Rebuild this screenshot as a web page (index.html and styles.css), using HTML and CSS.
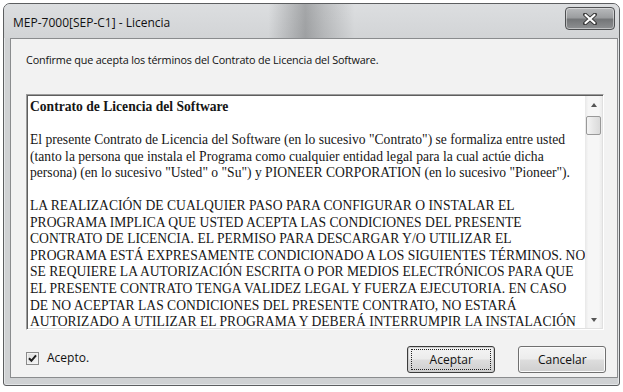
FILE: index.html
```html
<!DOCTYPE html>
<html lang="es">
<head>
  <meta charset="UTF-8">
  <title>MEP-7000[SEP-C1] - Licencia</title>
  <link rel="stylesheet" href="styles.css">
</head>
<body>
  <div class="window">
    <div class="titlebar">
      <span class="title">MEP-7000[SEP-C1] - Licencia</span>
      <div class="close">
        <svg width="14" height="12" viewBox="0 0 14 12">
          <path d="M2 1.5 L12 10.5 M12 1.5 L2 10.5" stroke="#3a3a3a" stroke-width="4" stroke-linecap="round"/>
          <path d="M2.5 2 L11.5 10 M11.5 2 L2.5 10" stroke="#fff" stroke-width="2.2" stroke-linecap="round"/>
        </svg>
      </div>
    </div>
    <div class="frame">
      <div class="client">
        <p class="prompt">Confirme que acepta los términos del Contrato de Licencia del Software.</p>

        <div class="license">
          <div class="license-text">
            <p><b>Contrato de Licencia del Software</b></p>
            <p>El presente Contrato de Licencia del Software (en lo sucesivo "Contrato") se formaliza entre usted<br>
            (tanto la persona que instala el Programa como cualquier entidad legal para la cual actúe dicha<br>
            persona) (en lo sucesivo "Usted" o "Su") y PIONEER CORPORATION (en lo sucesivo "Pioneer").</p>
            <p>LA REALIZACIÓN DE CUALQUIER PASO PARA CONFIGURAR O INSTALAR EL<br>
            PROGRAMA IMPLICA QUE USTED ACEPTA LAS CONDICIONES DEL PRESENTE<br>
            CONTRATO DE LICENCIA. EL PERMISO PARA DESCARGAR Y/O UTILIZAR EL<br>
            PROGRAMA ESTÁ EXPRESAMENTE CONDICIONADO A LOS SIGUIENTES TÉRMINOS. NO<br>
            SE REQUIERE LA AUTORIZACIÓN ESCRITA O POR MEDIOS ELECTRÓNICOS PARA QUE<br>
            EL PRESENTE CONTRATO TENGA VALIDEZ LEGAL Y FUERZA EJECUTORIA. EN CASO<br>
            DE NO ACEPTAR LAS CONDICIONES DEL PRESENTE CONTRATO, NO ESTARÁ<br>
            AUTORIZADO A UTILIZAR EL PROGRAMA Y DEBERÁ INTERRUMPIR LA INSTALACIÓN</p>
          </div>
          <div class="scrollbar">
            <div class="arrow up"></div>
            <div class="thumb"></div>
            <div class="track"></div>
            <div class="arrow down"></div>
          </div>
        </div>

        <div class="footer">
          <label class="check">
            <span class="box">
              <svg width="9" height="9" viewBox="0 0 9 9">
                <path d="M1 4.2 L3.4 6.8 L8 1.4" fill="none" stroke="#1e1e1e" stroke-width="2"/>
              </svg>
            </span>
            Acepto.
          </label>
          <div class="buttons">
            <button class="btn default"><span>Aceptar</span></button>
            <button class="btn">Cancelar</button>
          </div>
        </div>
      </div>
    </div>
  </div>
</body>
</html>
```

FILE: styles.css
```css
:root {
  --ui: "Open Sans", "Noto Sans", sans-serif;
  --serif: "Liberation Serif", "Times New Roman", serif;
  --frame: #cfd1d3;
  --client: #f2f2f2;
  --ink: #111;
}

body {
  margin: 0;
  padding: 3px 3px 6px 3px;
  background: #fff;
  font-family: var(--ui);
  font-size: 12px;
  color: var(--ink);
}

.window {
  width: 617px;
  height: 383px;
  box-sizing: border-box;
  display: flex;
  flex-direction: column;
  border: 1px solid #5c5e60;
  border-radius: 7px 7px 3px 3px;
  background: var(--frame);
  box-shadow: inset 0 0 0 1px #e4e6e8;
  overflow: hidden;
}

.titlebar {
  height: 34px;
  flex: none;
  display: flex;
  justify-content: space-between;
  align-items: flex-start;
  padding: 0 4px 0 9px;
  background:
    linear-gradient(90deg, transparent 43%, rgba(60, 62, 64, 0.35) 49%, rgba(60, 62, 64, 0.2) 52%, transparent 57%),
    linear-gradient(180deg, #dcdee0 0%, #d2d4d6 100%);
}

.title {
  padding-top: 11px;
  line-height: 16px;
  font-size: 12px;
}

.close {
  margin-top: 3px;
  width: 50px;
  height: 23px;
  box-sizing: border-box;
  display: flex;
  justify-content: center;
  align-items: center;
  border: 1px solid #4e5052;
  border-radius: 4px;
  background: linear-gradient(180deg, #b8babc 0%, #9c9ea0 45%, #747678 55%, #8e9092 100%);
  box-shadow: inset 0 0 0 1px rgba(255, 255, 255, 0.45);
}

.frame {
  flex: 1;
  display: flex;
  padding: 0 5px 7px 6px;
}

.client {
  flex: 1;
  display: flex;
  flex-direction: column;
  border: 1px solid #8a8c8e;
  background: var(--client);
  padding: 13px 11px 4px 15px;
}

.prompt {
  margin: 0 0 26px;
  line-height: 16px;
  font-size: 10.8px;
  letter-spacing: -0.15px;
}

/* sunken rich edit box */
.license {
  height: 236px;
  box-sizing: border-box;
  display: flex;
  margin-right: 2px;
  border: 1px solid;
  border-color: #9c9c9c #fff #fff #9c9c9c;
  box-shadow: inset 1px 1px 0 #5e5e5e, inset -1px -1px 0 #e0e0e0;
  background: #fff;
  overflow: hidden;
}

.license-text {
  flex: 1;
  padding: 4px 0 0 3px;
  font-family: var(--serif);
  font-size: 13.6px;
  line-height: 16.55px;
  white-space: nowrap;
  overflow: hidden;
  color: #161616;
}

.license-text p {
  margin: 0 0 16.55px;
}

.scrollbar {
  width: 17px;
  flex: none;
  display: flex;
  flex-direction: column;
  margin: 1px 1px 1px 0;
  background: linear-gradient(90deg, #e8e8e8 0%, #f6f6f6 20%, #f6f6f6 80%, #ececec 100%);
}

.arrow {
  height: 17px;
  flex: none;
  display: flex;
  justify-content: center;
  align-items: center;
}

.arrow::before {
  content: "";
  border-left: 3.5px solid transparent;
  border-right: 3.5px solid transparent;
}

.arrow.up::before {
  border-bottom: 4px solid #555;
}

.arrow.down::before {
  border-top: 4px solid #555;
}

.thumb {
  height: 19px;
  margin: 3px 0 0 1px;
  width: 15px;
  box-sizing: border-box;
  border: 1px solid #999;
  border-radius: 2px;
  background: linear-gradient(90deg, #f4f4f4 0%, #e6e6e6 50%, #dadada 100%);
}

.track {
  flex: 1;
}

.footer {
  flex: 1;
  display: flex;
  justify-content: space-between;
  align-items: flex-end;
}

.check {
  display: flex;
  align-items: center;
  gap: 8px;
  margin-bottom: 7px;
  line-height: 16px;
}

.box {
  width: 13px;
  height: 13px;
  box-sizing: border-box;
  display: flex;
  justify-content: center;
  align-items: center;
  border: 1px solid #8a8a8a;
  background: linear-gradient(135deg, #dcdcdc 0%, #f6f6f6 100%);
  box-shadow: inset 0 0 0 1px #f2f2f2;
}

.buttons {
  display: flex;
  gap: 23px;
}

.btn {
  width: 88px;
  height: 27px;
  padding: 0;
  font-family: var(--ui);
  font-size: 12px;
  color: var(--ink);
  border: 1px solid #707070;
  border-radius: 3px;
  background: linear-gradient(180deg, #f4f4f4 0%, #ececec 48%, #dddddd 52%, #cfcfcf 100%);
  box-shadow: inset 0 0 0 1px #fbfbfb;
}

.btn.default {
  border-color: #3c3c3c;
  box-shadow: inset 0 0 0 1px #cfcfcf;
}

.btn.default span {
  display: flex;
  justify-content: center;
  align-items: center;
  margin: 0 3px;
  height: 19px;
  border: 1px dotted #222;
}
```
